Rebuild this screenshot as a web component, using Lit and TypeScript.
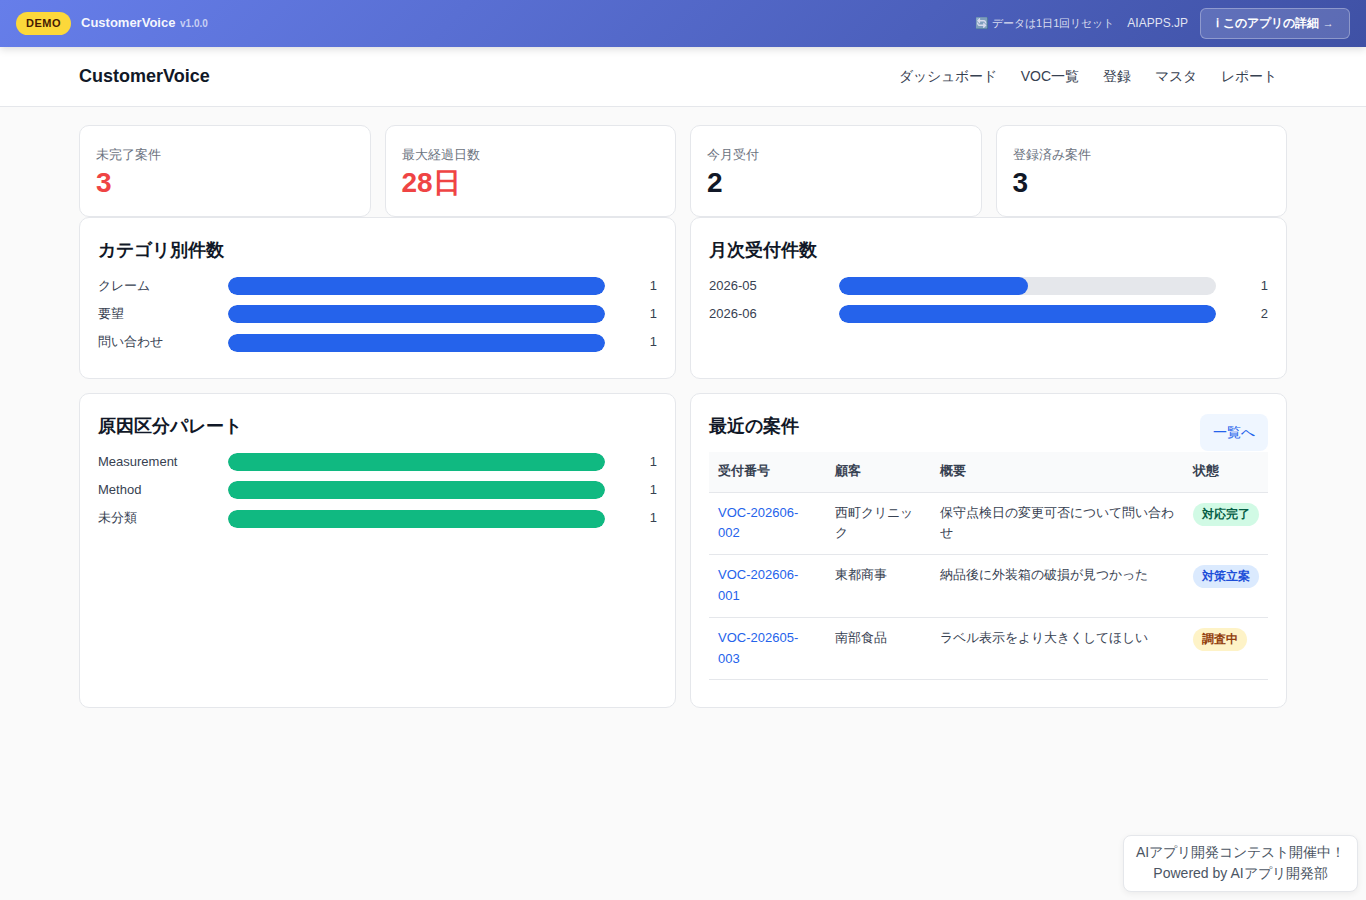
import { LitElement, html, css } from "lit";
import { customElement } from "lit/decorators.js";

const FONT = `"Liberation Sans", sans-serif`;

@customElement("bar-row")
class BarRow extends LitElement {
  static properties = { label: {}, value: {}, pct: { type: Number }, color: {} };
  label = ""; value = ""; pct = 100; color = "";
  static styles = css`
    :host { display: grid; grid-template-columns: 130px 1fr 52px; align-items: center; font-size: 13px; color: #374151; min-height: 20.4px; line-height: 20.4px; }
    .track { height: 18px; background: #e5e7eb; border-radius: 9px; overflow: hidden; }
    .fill { height: 100%; border-radius: 9px; }
    .blue { background: #2563eb; }
    .green { background: #10b981; }
    .val { text-align: right; }
  `;
  render() {
    return html`<div>${this.label}</div>
      <div class="track"><div class="fill ${this.color}" style="width:${this.pct}%"></div></div>
      <div class="val">${this.value}</div>`;
  }
}

@customElement("app-root")
class AppRoot extends LitElement {
  static styles = css`
    :host { display: block; min-height: 900px; background: #fafafa; font-family: ${css([FONT] as any)}; color: #111827; position: relative; overflow: hidden; height: 900px; box-sizing: border-box; line-height: 1.6; }
    a { text-decoration: none; color: inherit; }
    .banner { height: 47px; background: linear-gradient(135deg, #667eea 0%, #3f51a5 100%); display: flex; align-items: center; justify-content: space-between; padding: 0 16px; box-shadow: 0 2px 8px rgba(0,0,0,.15); position: relative; color: #fff; }
    .bl, .br { display: flex; align-items: center; }
    .demo { background: #fcd83a; color: #451a03; font-size: 11px; font-weight: 700; letter-spacing: .5px; border-radius: 12px; padding: 0 10px; height: 23px; line-height: 23px; }
    .bname { margin-left: 10px; font-size: 13px; font-weight: 700; color: rgba(255,255,255,.95); }
    .ver { font-size: 10px; font-weight: 700; opacity: .7; margin-left: 1px; }
    .reset { font-size: 11px; color: rgba(255,255,255,.8); }
    .ai { font-size: 12px; margin-left: 13px; color: rgba(255,255,255,.85); }
    .detail { margin-left: 12px; height: 31px; width: 150px; box-sizing: border-box; border: 1px solid rgba(255,255,255,.3); background: rgba(255,255,255,.15); border-radius: 6px; font-size: 12px; font-weight: 700; display: flex; align-items: center; justify-content: center; color: #fff; }
    .detail span { font-weight: 400; font-size: 11px; margin-left: 4px; opacity: .85; }
    .nav { height: 60px; background: #fff; border-bottom: 1px solid #e5e7eb; box-sizing: border-box; }
    .wrap { max-width: 1208px; margin: 0 auto; }
    .nav .wrap { height: 100%; display: flex; align-items: center; justify-content: space-between; }
    .logo { font-size: 18px; font-weight: 700; color: #111827; }
    .links { display: flex; gap: 24px; font-size: 14px; color: #374151; padding-right: 10px; }
    .main { padding-top: 18px; }
    .stats { display: grid; grid-template-columns: repeat(4, 1fr); gap: 14px; }
    .card { background: #fff; border: 1px solid #e5e7eb; border-radius: 10px; box-sizing: border-box; }
    .stat { height: 92px; padding: 19px 16px 0; }
    .slabel { font-size: 13px; color: #6b7280; line-height: 20px; }
    .sval { font-size: 28px; font-weight: 700; line-height: 36px; color: #111827; }
    .red { color: #ef4444; }
    .grid { display: grid; grid-template-columns: 1fr 1fr; gap: 14px; }
    .panel { padding: 18px; }
    .h162 { height: 162px; }
    .h315 { height: 315px; }
    h2 { margin: 0 0 10.8px; font-size: 18px; font-weight: 700; color: #111827; }
    .bars { display: flex; flex-direction: column; gap: 8px; }
    .phead { display: flex; justify-content: space-between; align-items: flex-start; }
    .more { background: #eff6ff; color: #2563eb; font-size: 14px; border-radius: 8px; width: 68px; height: 37px; display: flex; align-items: center; justify-content: center; margin-top: 2px; }
    table { border-collapse: collapse; width: 100%; table-layout: fixed; font-size: 13px; color: #374151; }
    th { background: #f9fafb; text-align: left; font-weight: 700; padding: 0 9px; height: 40px; border-bottom: 1px solid #e5e7eb; }
    td { padding: 10px 9px; vertical-align: top; border-bottom: 1px solid #e5e7eb; }
    td a { color: #2563eb; }
    .pill { display: inline-block; font-size: 12px; font-weight: 700; padding: 2px 9px; border-radius: 12px; white-space: nowrap; }
    .done { background: #d1fae5; color: #065f46; }
    .plan { background: #dbeafe; color: #1d4ed8; }
    .inv { background: #fef3c7; color: #92400e; }
    .float { position: absolute; right: 8px; bottom: 8px; width: 235px; height: 57px; box-sizing: border-box; background: #fff; border: 1px solid #e5e7eb; border-radius: 8px; box-shadow: 0 2px 6px rgba(0,0,0,.06); font-size: 14px; line-height: 21px; color: #4b5563; text-align: center; padding-top: 6px; }
  `;
  render() {
    return html`
      <div class="banner">
        <div class="bl"><span class="demo">DEMO</span><span class="bname">CustomerVoice <span class="ver">v1.0.0</span></span></div>
        <div class="br"><span class="reset">🔄 データは1日1回リセット</span><a class="ai">AIAPPS.JP</a><a class="detail">ℹ このアプリの詳細 <span>→</span></a></div>
      </div>
      <div class="nav"><div class="wrap"><a class="logo">CustomerVoice</a>
        <div class="links"><a>ダッシュボード</a><a>VOC一覧</a><a>登録</a><a>マスタ</a><a>レポート</a></div></div></div>
      <div class="wrap main">
        <div class="stats">
          <div class="card stat"><div class="slabel">未完了案件</div><div class="sval red">3</div></div>
          <div class="card stat"><div class="slabel">最大経過日数</div><div class="sval red">28日</div></div>
          <div class="card stat"><div class="slabel">今月受付</div><div class="sval">2</div></div>
          <div class="card stat"><div class="slabel">登録済み案件</div><div class="sval">3</div></div>
        </div>
        <div class="grid">
          <div class="card panel h162"><h2>カテゴリ別件数</h2><div class="bars">
            <bar-row label="クレーム" value="1" pct="100" color="blue"></bar-row>
            <bar-row label="要望" value="1" pct="100" color="blue"></bar-row>
            <bar-row label="問い合わせ" value="1" pct="100" color="blue"></bar-row></div></div>
          <div class="card panel h162"><h2>月次受付件数</h2><div class="bars">
            <bar-row label="2026-05" value="1" pct="50" color="blue"></bar-row>
            <bar-row label="2026-06" value="2" pct="100" color="blue"></bar-row></div></div>
        </div>
        <div class="grid" style="margin-top:14px">
          <div class="card panel h315"><h2>原因区分パレート</h2><div class="bars">
            <bar-row label="Measurement" value="1" pct="100" color="green"></bar-row>
            <bar-row label="Method" value="1" pct="100" color="green"></bar-row>
            <bar-row label="未分類" value="1" pct="100" color="green"></bar-row></div></div>
          <div class="card panel h315">
            <div class="phead"><h2>最近の案件</h2><a class="more">一覧へ</a></div>
            <table>
              <colgroup><col style="width:117px"/><col style="width:105px"/><col style="width:253px"/><col/></colgroup>
              <thead><tr><th>受付番号</th><th>顧客</th><th>概要</th><th>状態</th></tr></thead>
              <tbody>
                <tr><td><a>VOC-202606-002</a></td><td>西町クリニック</td><td>保守点検日の変更可否について問い合わせ</td><td><span class="pill done">対応完了</span></td></tr>
                <tr><td><a>VOC-202606-001</a></td><td>東都商事</td><td>納品後に外装箱の破損が見つかった</td><td><span class="pill plan">対策立案</span></td></tr>
                <tr><td><a>VOC-202605-003</a></td><td>南部食品</td><td>ラベル表示をより大きくしてほしい</td><td><span class="pill inv">調査中</span></td></tr>
              </tbody>
            </table>
          </div>
        </div>
      </div>
      <div class="float">AIアプリ開発コンテスト開催中！<br/>Powered by AIアプリ開発部</div>
    `;
  }
}
